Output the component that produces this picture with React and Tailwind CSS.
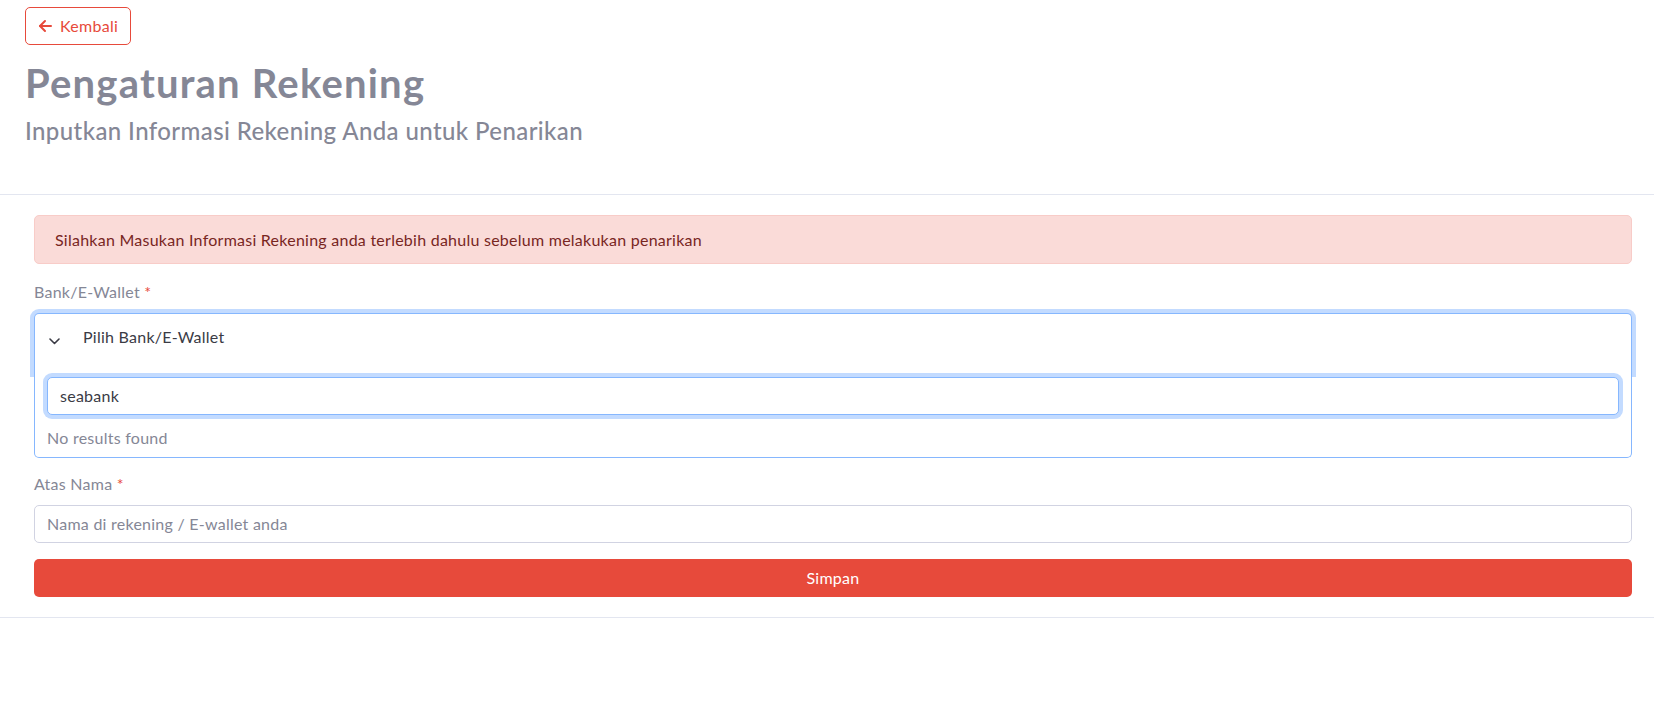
import React from "react";

function ArrowLeft() {
  return (
    <svg width="14" height="14" viewBox="0 0 14 14" fill="none" stroke="#e74a3b" strokeWidth="2" strokeLinecap="round" strokeLinejoin="round">
      <path d="M13 7H2" />
      <path d="M7 2L2 7l5 5" />
    </svg>
  );
}

function Chevron() {
  return (
    <svg width="11" height="7" viewBox="0 0 11 7" fill="none" stroke="#3a3b45" strokeWidth="1.6" strokeLinecap="round" strokeLinejoin="round">
      <path d="M1 1l4.5 4.5L10 1" />
    </svg>
  );
}

export default function App() {
  const font = { fontFamily: "Lato, 'Noto Sans', sans-serif" };
  return (
    <div className="w-full min-h-[708px] bg-white text-[#858796]" style={font}>
      <div className="px-[25px] pt-[7px] pb-[47px]">
        <button className="h-[38px] w-[106px] flex items-center gap-[8px] pl-[12px] border border-[#e74a3b] rounded-[5px] text-[#e74a3b] text-[16px] tracking-[0.3px] bg-white">
          <ArrowLeft />
          <span>Kembali</span>
        </button>
        <h1 className="mt-[14px] text-[40px] leading-[48px] font-bold tracking-[1.2px] text-[#858796]">Pengaturan Rekening</h1>
        <h2 className="mt-[8px] text-[24px] leading-[32px] font-medium tracking-[0.4px] text-[#858796]">Inputkan Informasi Rekening Anda untuk Penarikan</h2>
      </div>
      <div className="border-t border-b border-[#e3e6f0] pl-[34px] pr-[22px] pt-[20px] pb-[20px] tracking-[0.25px]">
        <div className="h-[49px] flex items-center px-[20px] bg-[#fadbd8] border border-[#f8ccc8] rounded-[5px] text-[#78261f] text-[16px]">
          Silahkan Masukan Informasi Rekening anda terlebih dahulu sebelum melakukan penarikan
        </div>
        <div className="mt-[16px] mb-[9px] text-[16px] leading-[24px]">
          Bank/E-Wallet <span className="text-[#e74a3b]">*</span>
        </div>
        <div className="relative">
          <div className="h-[60px] flex items-start pt-[13px] pl-[14px] border-t border-x border-[#86b7fe] rounded-t-[5px] shadow-[0_0_0_4px_#c3dbff] bg-white">
            <div className="mt-[11px] flex"><Chevron /></div>
            <span className="ml-[23px] text-[16px] leading-[20px] text-[#3a3b45]">Pilih Bank/E-Wallet</span>
          </div>
          <div className="relative z-10 h-[85px] px-[12px] pt-[4px] border-x border-b border-[#86b7fe] rounded-b-[5px] bg-white">
            <div className="h-[38px] flex items-center px-[12px] border border-[#86b7fe] rounded-[5px] shadow-[0_0_0_4px_#c3dbff] text-[16px] text-[#3a3b45] bg-white">
              seabank
            </div>
            <div className="mt-[11px] text-[16px] leading-[24px] text-[#858796]">No results found</div>
          </div>
        </div>
        <div className="mt-[14px] mb-[9px] text-[16px] leading-[24px]">
          Atas Nama <span className="text-[#e74a3b]">*</span>
        </div>
        <div className="h-[38px] flex items-center px-[12px] border border-[#d1d3e2] rounded-[5px] text-[16px] text-[#858796]">
          Nama di rekening / E-wallet anda
        </div>
        <button className="mt-[16px] w-full h-[38px] bg-[#e74a3b] rounded-[5px] text-white text-[16px]">Simpan</button>
      </div>
    </div>
  );
}
